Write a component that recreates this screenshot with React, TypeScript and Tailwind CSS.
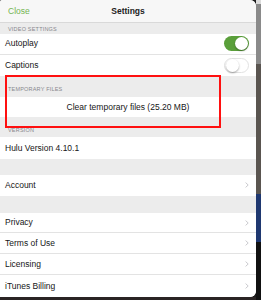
const font = { fontFamily: '"Liberation Sans", Arial, sans-serif' };

function Toggle({ on }: { on: boolean }) {
  return (
    <div
      className={`w-[25px] h-[15px] rounded-full flex items-center px-[1px] ${
        on ? "bg-[#5a9f3a] justify-end" : "bg-white border border-[#e2e2e2] justify-start"
      }`}
    >
      <div className="w-[13px] h-[13px] rounded-full bg-white shadow-[0_1px_2px_rgba(0,0,0,0.35)]" />
    </div>
  );
}

function Chevron() {
  return (
    <svg width="4" height="6" viewBox="0 0 4 6" className="shrink-0">
      <polyline points="0.6,0.6 3.2,3 0.6,5.4" fill="none" stroke="#c4c4c8" strokeWidth="0.9" />
    </svg>
  );
}

function SectionLabel({ text, h, pb }: { text: string; h: string; pb: string }) {
  return (
    <div className={`${h} ${pb} flex items-end pl-[8px] text-[5.5px] tracking-[0.2px] text-[#88888c] uppercase`}>
      {text}
    </div>
  );
}

function Row({
  label,
  right,
  border = true,
  h = "h-[21px]",
}: {
  label: string;
  right?: React.ReactNode;
  border?: boolean;
  h?: string;
}) {
  return (
    <div
      className={`${h} bg-white flex items-center justify-between pl-[5px] pr-[7px] text-[8.5px] text-[#161616] ${
        border ? "border-b border-[#e3e3e3]" : ""
      }`}
    >
      <span>{label}</span>
      {right}
    </div>
  );
}

export default function App() {
  return (
    <div className="w-[261px] h-[300px] bg-[#1c1c1c] flex overflow-hidden relative" style={font}>
      <div className="flex flex-col w-[256px] h-[300px]">
        <div className="w-[256px] h-[297px] bg-[#ececec] rounded-r-[6px] rounded-tl-[2px] overflow-hidden flex flex-col">
          <div className="h-[23px] bg-[#f7f7f7] border-b border-[#d9d9d9] grid grid-cols-[1fr_auto_1fr] items-center">
            <span className="pl-[8px] text-[8.5px] text-[#74b552]">Close</span>
            <span className="text-[8.5px] font-semibold text-[#222]">Settings</span>
            <span />
          </div>
          <SectionLabel text="Video Settings" h="h-[11px]" pb="pb-[1px]" />
          <Row label="Autoplay" right={<Toggle on />} />
          <Row label="Captions" right={<Toggle on={false} />} border={false} h="h-[21px]" />
          <SectionLabel text="Temporary Files" h="h-[22px]" pb="pb-[4px]" />
          <div className="h-[20px] bg-white flex items-center justify-center text-[8.5px] text-[#161616]">
            Clear temporary files (25.20 MB)
          </div>
          <SectionLabel text="Version" h="h-[20px]" pb="pb-[3px]" />
          <Row label="Hulu Version 4.10.1" border={false} h="h-[22px]" />
          <div className="h-[16px]" />
          <Row label="Account" right={<Chevron />} border={false} />
          <div className="h-[17px]" />
          <Row label="Privacy" right={<Chevron />} />
          <Row label="Terms of Use" right={<Chevron />} />
          <Row label="Licensing" right={<Chevron />} />
          <Row label="iTunes Billing" right={<Chevron />} border={false} h="h-[22px]" />
        </div>
        <div className="flex-1 bg-[#2a2424]" />
      </div>
      <div className="w-[5px] h-[300px] flex flex-col">
        <div className="h-[4px] bg-[#dcdcdc]" />
        <div className="h-[60px] bg-[#8a8a8a]" />
        <div className="h-[130px] bg-[#5a5550]" />
        <div className="h-[48px] bg-[#1f3870]" />
        <div className="flex-1 bg-[#111]" />
      </div>
      <div className="absolute left-[5px] top-[75px] w-[216px] h-[53px] border-2 border-[#ff1010]" />
    </div>
  );
}
